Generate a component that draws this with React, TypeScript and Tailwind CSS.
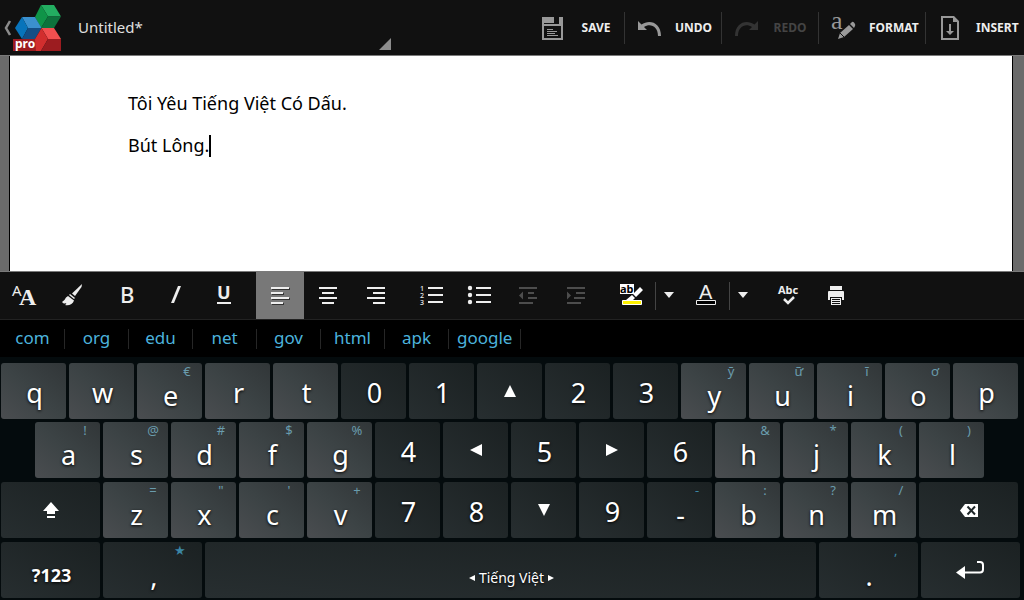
import { ReactNode } from "react";
import clsx from "clsx";

interface IIconProps {
  width?: number;
  height?: number;
  className?: string;
  children: ReactNode;
}

const Icon = ({ width = 48, height = 47, className, children }: IIconProps) => (
  <svg
    width={width}
    height={height}
    viewBox={`0 0 ${width} ${height}`}
    className={clsx("shrink-0", className)}
    fill="currentColor"
    aria-hidden="true"
  >
    {children}
  </svg>
);

const Logo = () => (
  <Icon width={62} height={55}>
    <path d="M10 21L6 28L10 35" fill="none" stroke="#8c8c8c" strokeWidth="2.5" />
    <path d="M41 5H54L61 16.5H48Z" fill="#23ae61" />
    <path d="M41 5L48 16.5L41 28L35 17Z" fill="#0f9448" />
    <path d="M48 16.5H61L54 28H41Z" fill="#0d723c" />
    <path d="M22 17H35L41.5 28H28Z" fill="#3b90ce" />
    <path d="M22 17L28 28L22 39L15 28Z" fill="#0874bb" />
    <path d="M28 28H41.5L35 39H22Z" fill="#144e85" />
    <path d="M13 39H41V51H13Z" fill="#9c1c20" />
    <path d="M41.5 28H54L61 39H48Z" fill="#f14f4f" />
    <path d="M41.5 28L48 39L41 51H36L35 39Z" fill="#d22e2e" />
    <path d="M48 39H61V51H41Z" fill="#9c1c20" />
    <text x="15" y="48" fill="#fff" fontSize="12" fontWeight="700">
      pro
    </text>
  </Icon>
);

interface IAction {
  label: string;
  width: string;
  disabled?: boolean;
  icon: ReactNode;
}

const actions: IAction[] = [
  {
    label: "SAVE",
    width: "w-[97px]",
    icon: (
      <>
        <path d="M14 17H26V23H14Z M31 17H35V24H31Z M14 22H16V40H14Z M33 22H35V40H33Z M14 38H35V40H14Z M14 24H35V26H14Z" />
        <path d="M19 29.5H25M19 31.5H29M19 33.5H27M19 35.5H30" stroke="currentColor" />
      </>
    ),
  },
  {
    label: "UNDO",
    width: "w-[97px]",
    icon: <path d="M13 21L16.5 24.5C24 19 36 22 36 36H33C33 26 25 23 19 27L22 30H13Z" />,
  },
  {
    label: "REDO",
    width: "w-[97px]",
    disabled: true,
    icon: <path d="M36 21L32.5 24.5C25 19 13 22 13 36H16C16 26 24 23 30 27L27 30H36Z" />,
  },
  {
    label: "FORMAT",
    width: "w-[107px]",
    icon: (
      <>
        <text x="12" y="29" fontSize="26" fontWeight="400" fontFamily="Liberation Serif, serif">
          a
        </text>
        <path d="M19 39L21 33L30 25L34 29L25 37Z M31 24L33 22Q34 21.5 35 22.5L36 24Q36.5 25 36 26L35 28Z" />
        <path d="M21 33L25 37" stroke="#111" />
      </>
    ),
  },
  {
    label: "INSERT",
    width: "w-[98px]",
    icon: (
      <>
        <path d="M15 16H28L33 21V40H15Z M17 18V38H31V22H27V18Z" fillRule="evenodd" />
        <path d="M23 24H25V31H28L24 35L20 31H23Z" />
      </>
    ),
  },
];

const Header = () => (
  <header className="flex h-14 items-stretch border-b border-[#7a7a7a] bg-[#111] text-[#eee]">
    <button aria-label="Back" className="shrink-0">
      <Logo />
    </button>
    <div className="relative ml-4 w-[313px]">
      <select
        aria-label="Document"
        className="h-full w-full appearance-none bg-transparent text-[15px] text-[#e0e0e0] outline-none"
      >
        <option>Untitled*</option>
      </select>
      <Icon width={12} height={12} className="pointer-events-none absolute right-0 bottom-[5px] text-[#8c8c8c]">
        <path d="M12 0V12H0Z" />
      </Icon>
    </div>
    <div className="ml-auto flex items-center">
      {actions.map((action, i) => (
        <button
          key={action.label}
          disabled={action.disabled}
          className={clsx(
            "flex h-8 items-center pr-2.5 text-xs font-bold",
            action.width,
            i < actions.length - 1 && "border-r border-[#333]",
            action.disabled && "text-[#444]"
          )}
        >
          <Icon width={50} height={55} className={action.disabled ? "text-[#333]" : "text-[#999]"}>
            {action.icon}
          </Icon>
          <span className="flex flex-1 justify-center">{action.label}</span>
        </button>
      ))}
    </div>
  </header>
);

const Page = () => (
  <main className="flex min-h-0 flex-1 bg-[#6b6b6b] pr-[11px] pl-[9px]">
    <div className="relative flex-1 border-x border-black bg-white">
      <textarea
        aria-label="Document text"
        spellCheck={false}
        defaultValue={"Tôi Yêu Tiếng Việt Có Dấu.\nBút Lông."}
        className="block h-full w-full resize-none overflow-hidden px-[118px] pt-[26px] text-lg leading-[42px] text-black outline-none"
      />
      <span className="absolute top-[79px] left-[199px] h-[22px] w-0.5 bg-black" />
    </div>
  </main>
);

interface ITool {
  label: string;
  width?: string;
  state?: "active" | "disabled";
  split?: boolean;
  gap?: boolean;
  icon: ReactNode;
}

const caret = <path d="M19 20H29L24 26Z" />;

const tools: ITool[] = [
  {
    label: "Font",
    icon: (
      <>
        <text x="12" y="24" fontSize="15">
          A
        </text>
        <text x="19" y="33" fontSize="24" fontWeight="700" fontFamily="Liberation Serif, serif">
          A
        </text>
      </>
    ),
  },
  {
    label: "Format painter",
    icon: (
      <>
        <path d="M34 12L33.5 15L27 24L24 21.5Z" />
        <path d="M22 22L27 26L26 27L21 23Z" />
        <path d="M20 24L26 28.5C25 32 21 34 17 33Q19 32 18 31Q16 32.5 14 30Q17 28 18 25.5Z" />
      </>
    ),
  },
  {
    label: "Bold",
    gap: true,
    icon: (
      <text x="16" y="31" fontSize="22" fontWeight="500">
        B
      </text>
    ),
  },
  { label: "Italic", icon: <path d="M26 14H29L22 31H19Z" /> },
  {
    label: "Underline",
    icon: (
      <>
        <text x="17" y="27" fontSize="18" fontWeight="700">
          U
        </text>
        <path d="M17 30H31V32H17Z" />
      </>
    ),
  },
  {
    label: "Align left",
    gap: true,
    state: "active",
    icon: (
      <>
        <path d="M16 16H34V18H16Z M16 21H28V23H16Z M16 26H34V28H16Z M16 31H28V33H16Z" fill="#333" />
        <path d="M15 15H33V17H15Z M15 20H27V22H15Z M15 25H33V27H15Z M15 30H27V32H15Z" />
      </>
    ),
  },
  {
    label: "Align center",
    icon: <path d="M15 15H33V17H15Z M18 20H30V22H18Z M15 25H33V27H15Z M18 30H30V32H18Z" />,
  },
  {
    label: "Align right",
    icon: <path d="M15 15H33V17H15Z M21 20H33V22H21Z M15 25H33V27H15Z M21 30H33V32H21Z" />,
  },
  {
    label: "Numbered list",
    gap: true,
    icon: (
      <>
        <path d="M20 15H35V17H20Z M20 22H35V24H20Z M20 29H35V31H20Z" />
        <g fontSize="7" fontWeight="500">
          <text x="12" y="19">
            1
          </text>
          <text x="12" y="26">
            2
          </text>
          <text x="12" y="33">
            3
          </text>
        </g>
      </>
    ),
  },
  {
    label: "Bulleted list",
    icon: (
      <>
        <path d="M20 15H35V17H20Z M20 22H35V24H20Z M20 29H35V31H20Z" />
        <circle cx="14" cy="16" r="2.2" />
        <circle cx="14" cy="23" r="2.2" />
        <circle cx="14" cy="30" r="2.2" />
      </>
    ),
  },
  {
    label: "Decrease indent",
    state: "disabled",
    icon: <path d="M15 15H33V17H15Z M24 20H30V22H24Z M24 25H33V27H24Z M15 30H29V32H15Z M15 23.5L19 19.5V27.5Z" />,
  },
  {
    label: "Increase indent",
    state: "disabled",
    icon: <path d="M15 15H33V17H15Z M24 20H33V22H24Z M22 25H33V27H22Z M15 30H29V32H15Z M15 19.5L19 23.5L15 27.5Z" />,
  },
  {
    label: "Highlight",
    gap: true,
    split: true,
    width: "w-12",
    icon: (
      <>
        <path d="M12 12H26V22H12Z" fill="#fff" />
        <text x="12" y="21" fontSize="11" fontWeight="700" fill="#000">
          ab
        </text>
        <path d="M32 15L35 18L28 25L25 22Z M24 23L27 26L25 28H18Z" fill="#fff" />
        <path d="M14.5 28.5H33.5V32.5H14.5Z" fill="#fff200" stroke="#fff" />
      </>
    ),
  },
  { label: "Highlight color", width: "w-[26px]", icon: caret },
  {
    label: "Text color",
    split: true,
    width: "w-[47px]",
    icon: (
      <>
        <text x="17" y="27" fontSize="20" fontFamily="Liberation Sans, sans-serif">
          A
        </text>
        <path d="M14.5 28.5H33.5V32.5H14.5Z" fill="#000" stroke="currentColor" />
      </>
    ),
  },
  { label: "Choose text color", width: "w-[27px]", icon: caret },
  {
    label: "Spelling",
    gap: true,
    icon: (
      <>
        <text x="14" y="22" fontSize="11" fontWeight="700">
          Abc
        </text>
        <path d="M20 27L24 31L30 25" fill="none" stroke="currentColor" strokeWidth="2.5" />
      </>
    ),
  },
  {
    label: "Print",
    icon: (
      <>
        <path d="M18 14H30V18H18Z M17 19H31Q32 19 32 20V28H30V25H18V28H16V20Q16 19 17 19Z" />
        <path d="M19 26H29V33H19Z" />
        <path d="M20 27.5H28M20 29.5H28M20 31.5H28" stroke="#111" />
      </>
    ),
  },
];

const Toolbar = () => (
  <div
    role="toolbar"
    aria-label="Formatting"
    className="flex h-[49px] items-stretch border-t border-b border-t-[#7a7a7a] border-b-[#222] bg-[#111] text-[#eee]"
  >
    {tools.map(({ label, width = "w-12", state, split, gap, icon }) => (
      <button
        key={label}
        aria-label={label}
        disabled={state === "disabled"}
        className={clsx(
          "flex items-center justify-center",
          width,
          gap && "ml-2",
          state === "active" && "bg-[#787878]",
          state === "disabled" && "text-[#4d4d4d]"
        )}
      >
        <Icon className={split && "-mr-px"}>{icon}</Icon>
        {split && <span className="h-7 w-px shrink-0 bg-[#444]" />}
      </button>
    ))}
  </div>
);

const suggestions = ["com", "org", "edu", "net", "gov", "html", "apk", "google"];

const Suggestions = () => (
  <div className="flex h-[37px] items-center bg-black pl-px text-[17px] text-[#4cb3dc]">
    {suggestions.map((word) => (
      <button
        key={word}
        className="flex h-5 min-w-16 items-center justify-center border-r border-[#262626] px-2 pb-0.5"
      >
        {word}
      </button>
    ))}
  </div>
);

interface IKey {
  label: string;
  hint?: string;
  dark?: boolean;
  span?: string;
  face?: ReactNode;
}

const letter = (label: string, hint?: string): IKey => ({ label, hint });
const pad = (label: string, face?: ReactNode, hint?: string): IKey => ({ label, face, hint, dark: true });

const arrow = (d: string) => (
  <Icon width={12} height={12}>
    <path d={d} />
  </Icon>
);

const rows: IKey[][] = [
  [
    letter("q"),
    letter("w"),
    letter("e", "€"),
    letter("r"),
    letter("t"),
    pad("0"),
    pad("1"),
    pad("Up", arrow("M6 0L12 12H0Z")),
    pad("2"),
    pad("3"),
    letter("y", "ȳ"),
    letter("u", "ữ"),
    letter("i", "ī"),
    letter("o", "ơ"),
    letter("p"),
  ],
  [
    { ...letter("a", "!"), span: "col-start-2 col-span-2" },
    letter("s", "@"),
    letter("d", "#"),
    letter("f", "$"),
    letter("g", "%"),
    pad("4"),
    pad("Left", arrow("M0 6L12 0V12Z")),
    pad("5"),
    pad("Right", arrow("M12 6L0 0V12Z")),
    pad("6"),
    letter("h", "&"),
    letter("j", "*"),
    letter("k", "("),
    letter("l", ")"),
  ],
  [
    {
      label: "Shift",
      dark: true,
      span: "col-span-3",
      face: (
        <Icon width={16} height={16}>
          <path d="M8 0L16 9H12V12H4V9H0Z M4 14H12V16H4Z" />
        </Icon>
      ),
    },
    letter("z", "="),
    letter("x", '"'),
    letter("c", "'"),
    letter("v", "+"),
    pad("7"),
    pad("8"),
    pad("Down", arrow("M0 0H12L6 12Z")),
    pad("9"),
    pad("-", <span className="pt-2.5 pl-0.5">-</span>, "-"),
    letter("b", ":"),
    letter("n", "?"),
    letter("m", "/"),
    {
      label: "Backspace",
      dark: true,
      span: "col-span-3",
      face: (
        <Icon width={18} height={13}>
          <path d="M0 6.5L5 0H18V13H5Z" />
          <path d="M7.5 2.5L15 10.5M15 2.5L7.5 10.5" stroke="#20282a" strokeWidth="2" />
        </Icon>
      ),
    },
  ],
  [
    {
      label: "Symbols",
      dark: true,
      span: "col-span-3",
      face: <span className="pt-2.5 pl-0.5 text-lg font-bold">?123</span>,
    },
    { label: ",", hint: "★", dark: true, span: "col-span-3" },
    {
      label: "Space",
      dark: true,
      span: "col-span-18",
      face: (
        <span className="flex items-center gap-1 pt-4 pl-0.5 text-sm">
          <Icon width={6} height={6}>
            <path d="M0 3L6 0V6Z" />
          </Icon>
          Tiếng Việt
          <Icon width={6} height={6}>
            <path d="M6 3L0 0V6Z" />
          </Icon>
        </span>
      ),
    },
    { label: ".", hint: ",", dark: true, span: "col-span-3" },
    {
      label: "Enter",
      dark: true,
      span: "col-span-3",
      face: (
        <Icon width={28} height={18}>
          <path d="M0 11.5L9 5V18Z" />
          <path d="M8 11.5H24Q27 11.5 27 8.5V4Q27 1 24 1H21" fill="none" stroke="currentColor" strokeWidth="2" />
        </Icon>
      ),
    },
  ],
];

const Key = ({ label, hint, dark, span = "col-span-2", face }: IKey) => {
  const wide = span === "col-span-3";

  return (
    <button
      aria-label={label}
      className={clsx(
        "relative mr-0.5 ml-px flex h-14 items-center justify-center rounded-[3px] bg-linear-to-tr text-[27px] leading-8 text-white text-shadow-[0_1px_3px_#000]",
        dark ? "from-[#272e30] to-[#1b2122]" : "from-[#4a4d50] via-[#3c4345] to-[#313638]",
        span
      )}
    >
      {face ?? (
        <span className={clsx("pl-0.5", wide ? "pt-3" : hint ? "pt-2.5" : "pt-1")}>{label}</span>
      )}
      {hint && (
        <span
          className={clsx(
            "absolute top-0 w-6 text-center text-[13px] leading-4 text-shadow-none",
            wide ? "right-2.5" : "right-[3px]",
            dark ? "text-[#3b86a4]" : "text-[#6a9cad]"
          )}
        >
          {hint}
        </span>
      )}
    </button>
  );
};

const Keyboard = () => (
  <div className="flex flex-col gap-1 bg-[#040b0d] pt-1.5 pb-0.5">
    {rows.map((row, i) => (
      <div
        key={i}
        className={clsx(
          "grid grid-cols-[repeat(30,minmax(0,1fr))]",
          i === 0 && "-mb-px",
          i === 3 ? "pr-0.5" : "pr-1"
        )}
      >
        {row.map((key) => (
          <Key key={key.label} {...key} />
        ))}
      </div>
    ))}
  </div>
);

const App = () => {
  return (
    <div className="flex h-screen flex-col overflow-hidden bg-black font-['Noto_Sans',sans-serif]">
      <Header />
      <Page />
      <Toolbar />
      <Suggestions />
      <Keyboard />
    </div>
  );
};

export default App;
